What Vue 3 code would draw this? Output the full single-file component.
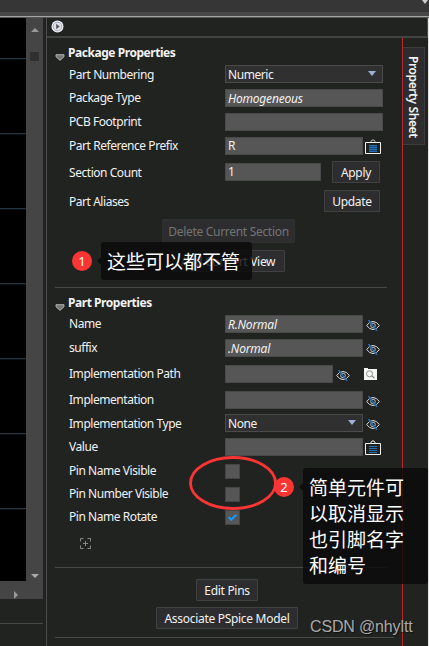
<template>
  <div class="window">
    <header class="toolbar">
      <svg class="toolbar-arrow" viewBox="0 0 6 4"><path d="M0 0h6L3 4z" fill="#ccc" /></svg>
    </header>

    <div class="workspace">
      <!-- Schematic canvas -->
      <aside class="left">
        <div class="canvas-wrap">
          <div class="canvas"></div>
          <div class="vscroll">
            <svg class="up" viewBox="0 0 8 4"><path d="M0 4h8L4 0z" fill="#999" /></svg>
            <div class="thumb"></div>
            <svg class="down" viewBox="0 0 8 4"><path d="M0 0h8L4 4z" fill="#aaa" /></svg>
          </div>
        </div>
        <div class="hscroll">
          <svg viewBox="0 0 4 8"><path d="M0 0v8L4 4z" fill="#999" /></svg>
        </div>
        <div class="status"></div>
      </aside>

      <!-- Property sheet -->
      <section class="panel">
        <div class="strip">
          <svg class="play" viewBox="0 0 13 13">
            <circle cx="6.5" cy="6.5" r="6" fill="#f4f5f8" />
            <circle cx="6.5" cy="6.5" r="4.4" fill="#dce0ea" stroke="#9aa0b4" stroke-width="0.9" />
            <path d="M5.2 3.8v5.4l3.5-2.7z" fill="#555" />
          </svg>
        </div>
        <div class="content">
          <div class="sheet">
            <div class="heading">
              <svg viewBox="0 0 10 7"><path d="M1 .7h8v2L5 6.4 1 2.7z" fill="#777" stroke="#bbb" stroke-width="0.9" /></svg>
              Package Properties
            </div>
            <div v-for="row in packageRows" :key="row.label" class="row" :class="row.cls">
              <span class="label">{{ row.label }}</span>
              <span class="field" :class="[row.size, { select: row.select, italic: row.italic }]">
                {{ row.value }}
                <svg v-if="row.select" class="caret" viewBox="0 0 8 5"><path d="M0 0h8L4 5z" fill="#9fb0d6" /></svg>
              </span>
              <svg v-if="row.icon" class="case" viewBox="0 0 16 15">
                <path d="M6 3.500V2.500L7 1h2l1 1.500v1" fill="none" stroke="#bbb" />
                <path d="M.5 3.500h15v11H.5z" fill="#202220" stroke="#f2f2f2" />
                <path d="M4 6h8v7H4z" fill="#164a78" />
                <path d="M4 6.500h8M4 8.500h8M4 10.500h8M4 12.500h8" stroke="#2270b5" />
              </svg>
              <button v-if="row.button" class="btn apply">{{ row.button }}</button>
            </div>
            <div class="row aliases">
              <span class="label">Part Aliases</span>
              <button class="btn update">Update</button>
            </div>
            <button class="btn delete" disabled>Delete Current Section</button>
            <button class="btn convert">Add Convert View</button>
            <hr class="after-package">

            <div class="heading second">
              <svg viewBox="0 0 10 7"><path d="M1 .7h8v2L5 6.4 1 2.7z" fill="#777" stroke="#bbb" stroke-width="0.9" /></svg>
              Part Properties
            </div>
            <div v-for="row in partRows" :key="row.label" class="row" :class="row.cls">
              <span class="label">{{ row.label }}</span>
              <span class="field" :class="[row.size, { select: row.select, italic: row.italic }]">
                {{ row.value }}
                <svg v-if="row.select" class="caret" viewBox="0 0 8 5"><path d="M0 0h8L4 5z" fill="#9fb0d6" /></svg>
              </span>
              <svg v-if="row.eye" class="eye" viewBox="0 0 14 11">
                <path d="M.6 5.500Q3.500 1.500 7 1.500t6.400 4Q10.500 9.500 7 9.500T.6 5.500z" fill="none" stroke="#ddd" />
                <circle cx="7" cy="5.500" r="2.300" fill="none" stroke="#ccc" stroke-width="0.9" />
                <path d="M2.500 0l8.500 11" stroke="#2372b8" stroke-width="1.400" />
              </svg>
              <svg v-if="row.browse" class="browse" viewBox="0 0 13 12">
                <path d="M0 0h4v1h9v11H0z" fill="#f5f5f5" />
                <circle cx="5.500" cy="5.800" r="3" fill="none" stroke="#888" stroke-width="0.9" />
                <path d="M7.800 7.800l2.700 2.400" stroke="#777" stroke-width="1.100" />
              </svg>
              <svg v-if="row.icon" class="case" viewBox="0 0 16 15">
                <path d="M6 3.500V2.500L7 1h2l1 1.500v1" fill="none" stroke="#eee" />
                <path d="M.5 3.500h15v11H.5z" fill="#202220" stroke="#f2f2f2" />
                <path d="M4 6.500h8M4 8.500h8M4 10.500h8M4 12.500h8" stroke="#2270b5" />
              </svg>
            </div>
            <div v-for="pin in pinRows" :key="pin.label" class="row pin">
              <span class="label">{{ pin.label }}</span>
              <span class="checkbox">
                <svg v-if="pin.checked" viewBox="0 0 9 7"><path d="M.7 3.200L3.300 5.700 8.300.8" fill="none" stroke="#1199ff" stroke-width="2.100" /></svg>
              </span>
            </div>
            <svg class="add" viewBox="0 0 11 11">
              <path d="M.5 3.500v-3h3M7.500.5h3v3M10.500 7.500v3h-3M3.500 10.500h-3v-3M5.500 3v5M3 5.500h5" fill="none" stroke="#858685" />
            </svg>
            <hr class="after-part">
            <button class="btn edit">Edit Pins</button>
            <button class="btn associate">Associate PSpice Model</button>
            <hr class="last">
          </div>
          <div class="tabs">
            <div class="tab">Property Sheet</div>
          </div>
        </div>
      </section>
    </div>

    <!-- Annotations -->
    <svg class="ring" viewBox="0 0 90 56"><ellipse cx="45" cy="28" rx="42.500" ry="25.500" fill="none" stroke="#fa3534" stroke-width="2.800" /></svg>
    <span class="badge one">1</span>
    <div class="note note-one">这些可以都不管</div>
    <span class="badge two">2</span>
    <div class="note note-two">简单元件可以取消显示也引脚名字和编号</div>
    <div class="watermark">CSDN @nhyltt</div>
  </div>
</template>

<script setup>
const packageRows = [
  { label: 'Part Numbering', value: 'Numeric', size: 'wide', select: true, cls: 'gap-3 low' },
  { label: 'Package Type', value: 'Homogeneous', size: 'wide', italic: true, cls: 'gap-6' },
  { label: 'PCB Footprint', value: '', size: 'wide', cls: 'gap-6' },
  { label: 'Part Reference Prefix', value: 'R', size: 'normal', icon: true, cls: 'gap-6' },
  { label: 'Section Count', value: '1', size: 'small', button: 'Apply', cls: 'gap-6 tall low' },
]

const partRows = [
  { label: 'Name', value: 'R.Normal', size: 'normal', italic: true, eye: true, cls: 'gap-3' },
  { label: 'suffix', value: '.Normal', size: 'normal', italic: true, eye: true, cls: 'gap-6' },
  { label: 'Implementation Path', value: '', size: 'medium', eye: true, browse: true, cls: 'gap-8' },
  { label: 'Implementation', value: '', size: 'normal', eye: true, cls: 'gap-8' },
  { label: 'Implementation Type', value: 'None', size: 'normal', select: true, eye: true, cls: 'gap-5 low' },
  { label: 'Value', value: '', size: 'normal', icon: true, cls: 'gap-6' },
]

const pinRows = [
  { label: 'Pin Name Visible', checked: false },
  { label: 'Pin Number Visible', checked: false },
  { label: 'Pin Name Rotate', checked: true },
]
</script>

<style>
body {
  margin: 0;
  background: #212321;
}
</style>

<style scoped>
* {
  box-sizing: border-box;
}

.window {
  position: relative;
  width: 429px;
  height: 646px;
  overflow: hidden;
  display: flex;
  flex-direction: column;
  background: #212321;
  color: #f2f2f2;
  font-family: "Noto Sans", "Open Sans", sans-serif;
  font-size: 12px;
  letter-spacing: -0.45px;
}

svg {
  display: block;
  flex: none;
}

.toolbar {
  height: 18px;
  flex: none;
  display: flex;
  justify-content: flex-end;
  background: linear-gradient(#363636 12px, #484848 12px, #484848 16px, #a5a5a5 16px, #a5a5a5 17px, #555 17px);
}
.toolbar-arrow {
  width: 6px;
  height: 4px;
  margin-right: 1px;
}

.workspace {
  flex: 1;
  display: flex;
  min-height: 0;
}

.left {
  width: 43px;
  flex: none;
  display: flex;
  flex-direction: column;
}
.canvas-wrap {
  height: 563px;
  display: flex;
}
.canvas {
  width: 26px;
  background: repeating-linear-gradient(#000 0, #000 40px, #26343f 40px, #26343f 41px, #0b1014 41px, #0b1014 42px, #000 42px, #000 75px);
}
.vscroll {
  width: 17px;
  background: #454545;
  display: flex;
  flex-direction: column;
  align-items: center;
}
.up {
  width: 8px;
  height: 4px;
  margin-top: 10px;
}
.thumb {
  width: 9px;
  height: 9px;
  margin-top: 20px;
  background: #303030;
}
.down {
  width: 8px;
  height: 4px;
  margin-top: auto;
  margin-bottom: 3px;
}
.hscroll {
  height: 18px;
  padding: 10px 0 0 14px;
  background: #454545;
}
.hscroll svg {
  width: 4px;
  height: 8px;
}
.status {
  height: 25px;
  border-bottom: 1px solid #484a48;
}

.panel {
  flex: 1;
  margin-left: 3px;
  border-left: 1px solid #4b4d4b;
  border-right: 1px solid #e4e4e4;
  display: flex;
  flex-direction: column;
}
.strip {
  height: 20px;
  flex: none;
  padding: 2px 0 0 4px;
  border-right: 1px solid #4b4d4b;
  border-bottom: 2px solid #414341;
}
.play {
  width: 13px;
  height: 13px;
}
.content {
  flex: 1;
  display: flex;
}
.sheet {
  width: 355px;
  padding: 6px 0 0 8px;
  display: flex;
  flex-direction: column;
}

.heading {
  height: 18px;
  display: flex;
  align-items: center;
  gap: 4px;
  padding-bottom: 1px;
  font-weight: 700;
  letter-spacing: -0.45px;
}
.heading svg {
  width: 10px;
  height: 7px;
  margin: 9px -1px 0 0;
}
.heading.second {
  margin-top: 6px;
}

.row {
  height: 18px;
  flex: none;
  display: flex;
  align-items: center;
}
.gap-3 { margin-top: 3px; }
.gap-5 { margin-top: 5px; }
.gap-6 { margin-top: 6px; }
.gap-8 { margin-top: 8px; }
.tall { height: 22px; }

.label {
  width: 170px;
  flex: none;
  padding-left: 14px;
  line-height: 16px;
  white-space: nowrap;
}
.low .label,
.aliases .label {
  padding-top: 2px;
}
.field {
  height: 18px;
  flex: none;
  display: flex;
  align-items: center;
  justify-content: space-between;
  padding: 0 10px 0 2px;
  border: 1px solid #494949;
  background: #565656;
  line-height: 16px;
}
.field.select {
  padding-top: 1px;
  background: #303030;
  border-color: #4a4a4a;
}
.italic {
  padding-top: 1px;
  font-style: italic;
  letter-spacing: -0.2px;
}
.wide { width: 158px; }
.normal { width: 138px; }
.medium { width: 108px; }
.small { width: 96px; }
.normal.select { padding-right: 6px; }
.wide.select { padding-right: 6px; }
.caret {
  width: 8px;
  height: 5px;
  margin-bottom: 3px;
}

.case {
  width: 16px;
  height: 15px;
  margin-left: 2px;
}
.eye {
  width: 14px;
  height: 11px;
  margin: 2px 0 0 3px;
}
.browse {
  width: 13px;
  height: 12px;
  margin-left: 14px;
}

.btn {
  flex: none;
  height: 22px;
  padding: 0;
  border: 1px solid #414141;
  border-radius: 1px;
  background: #2d2d2f;
  color: #f2f2f2;
  font: inherit;
  letter-spacing: -0.3px;
  line-height: 20px;
  white-space: nowrap;
}
.apply {
  width: 48px;
  margin-left: 11px;
  padding-top: 1px;
}
.aliases {
  height: 22px;
  margin-top: 7px;
}
.update {
  width: 56px;
  margin-left: 99px;
  padding-top: 1px;
}
.delete {
  width: 133px;
  height: 24px;
  margin: 7px 0 0 107px;
  padding-top: 2px;
  border-color: #303030;
  color: #747474;
}
.convert {
  width: 114px;
  margin: 7px 0 0 116px;
  padding-top: 1px;
}

hr {
  flex: none;
  width: 332px;
  height: 1px;
  margin: 0;
  border: 0;
  background: #484a48;
}
.after-package { margin-top: 15px; }
.after-part { margin-top: 18px; }
.last {
  width: 339px;
  margin-top: 8px;
}

.pin {
  height: 15px;
  margin-top: 8px;
}
.pin .label {
  padding-bottom: 1px;
}
.checkbox {
  width: 15px;
  height: 15px;
  display: flex;
  align-items: center;
  justify-content: center;
  border: 1px solid #454545;
  background: #565656;
}
.checkbox svg {
  width: 9px;
  height: 7px;
}
.add {
  width: 11px;
  height: 11px;
  margin: 13px 0 0 25px;
}
.edit {
  width: 62px;
  margin: 11px 0 0 141px;
  padding-top: 1px;
}
.associate {
  width: 142px;
  margin: 6px 0 0 101px;
  padding-top: 1px;
}

.tabs {
  flex: 1;
  border-left: 1px solid #b9282c;
  padding-top: 9px;
}
.tab {
  width: 22px;
  height: 98px;
  display: flex;
  align-items: center;
  justify-content: flex-start;
  padding: 8px 2px 0 0;
  border: 1px solid #3c3c3c;
  border-left: 0;
  background: #2d2d2f;
  font-weight: 600;
  letter-spacing: -0.4px;
  line-height: 18px;
  writing-mode: vertical-rl;
  white-space: nowrap;
}

/* Annotation layer */
.ring {
  position: absolute;
  left: 188px;
  top: 455px;
  width: 90px;
  height: 56px;
}
.badge {
  position: absolute;
  width: 20px;
  height: 20px;
  border-radius: 50%;
  background: #fa3534;
  color: #fff;
  font-size: 13px;
  letter-spacing: 0;
  line-height: 20px;
  text-align: center;
}
.one {
  left: 72px;
  top: 251px;
}
.two {
  left: 274px;
  top: 477px;
}
.note {
  position: absolute;
  border-radius: 3px;
  background: rgba(10, 10, 10, 0.82);
  color: #fff;
  font-family: "Noto Sans CJK SC", sans-serif;
  font-size: 19px;
  font-weight: 400;
  line-height: 26px;
  letter-spacing: 0;
}
.note::before {
  content: "";
  position: absolute;
  left: -4px;
  top: 15px;
  border: 4px solid transparent;
  border-left: 0;
  border-right-color: rgba(10, 10, 10, 0.82);
}
.note-one {
  left: 101px;
  top: 242px;
  width: 151px;
  height: 38px;
  padding: 6px 0 0 6px;
}
.note-two {
  left: 303px;
  top: 468px;
  width: 125px;
  height: 116px;
  padding: 6px 22px 0 6px;
}
.watermark {
  position: absolute;
  left: 310px;
  top: 617px;
  color: #a9a9a9;
  font-family: "Liberation Sans", Arial, sans-serif;
  font-size: 16px;
  line-height: 20px;
  letter-spacing: -0.15px;
  text-shadow: 1px 1px 1px #111;
  white-space: nowrap;
}
</style>
